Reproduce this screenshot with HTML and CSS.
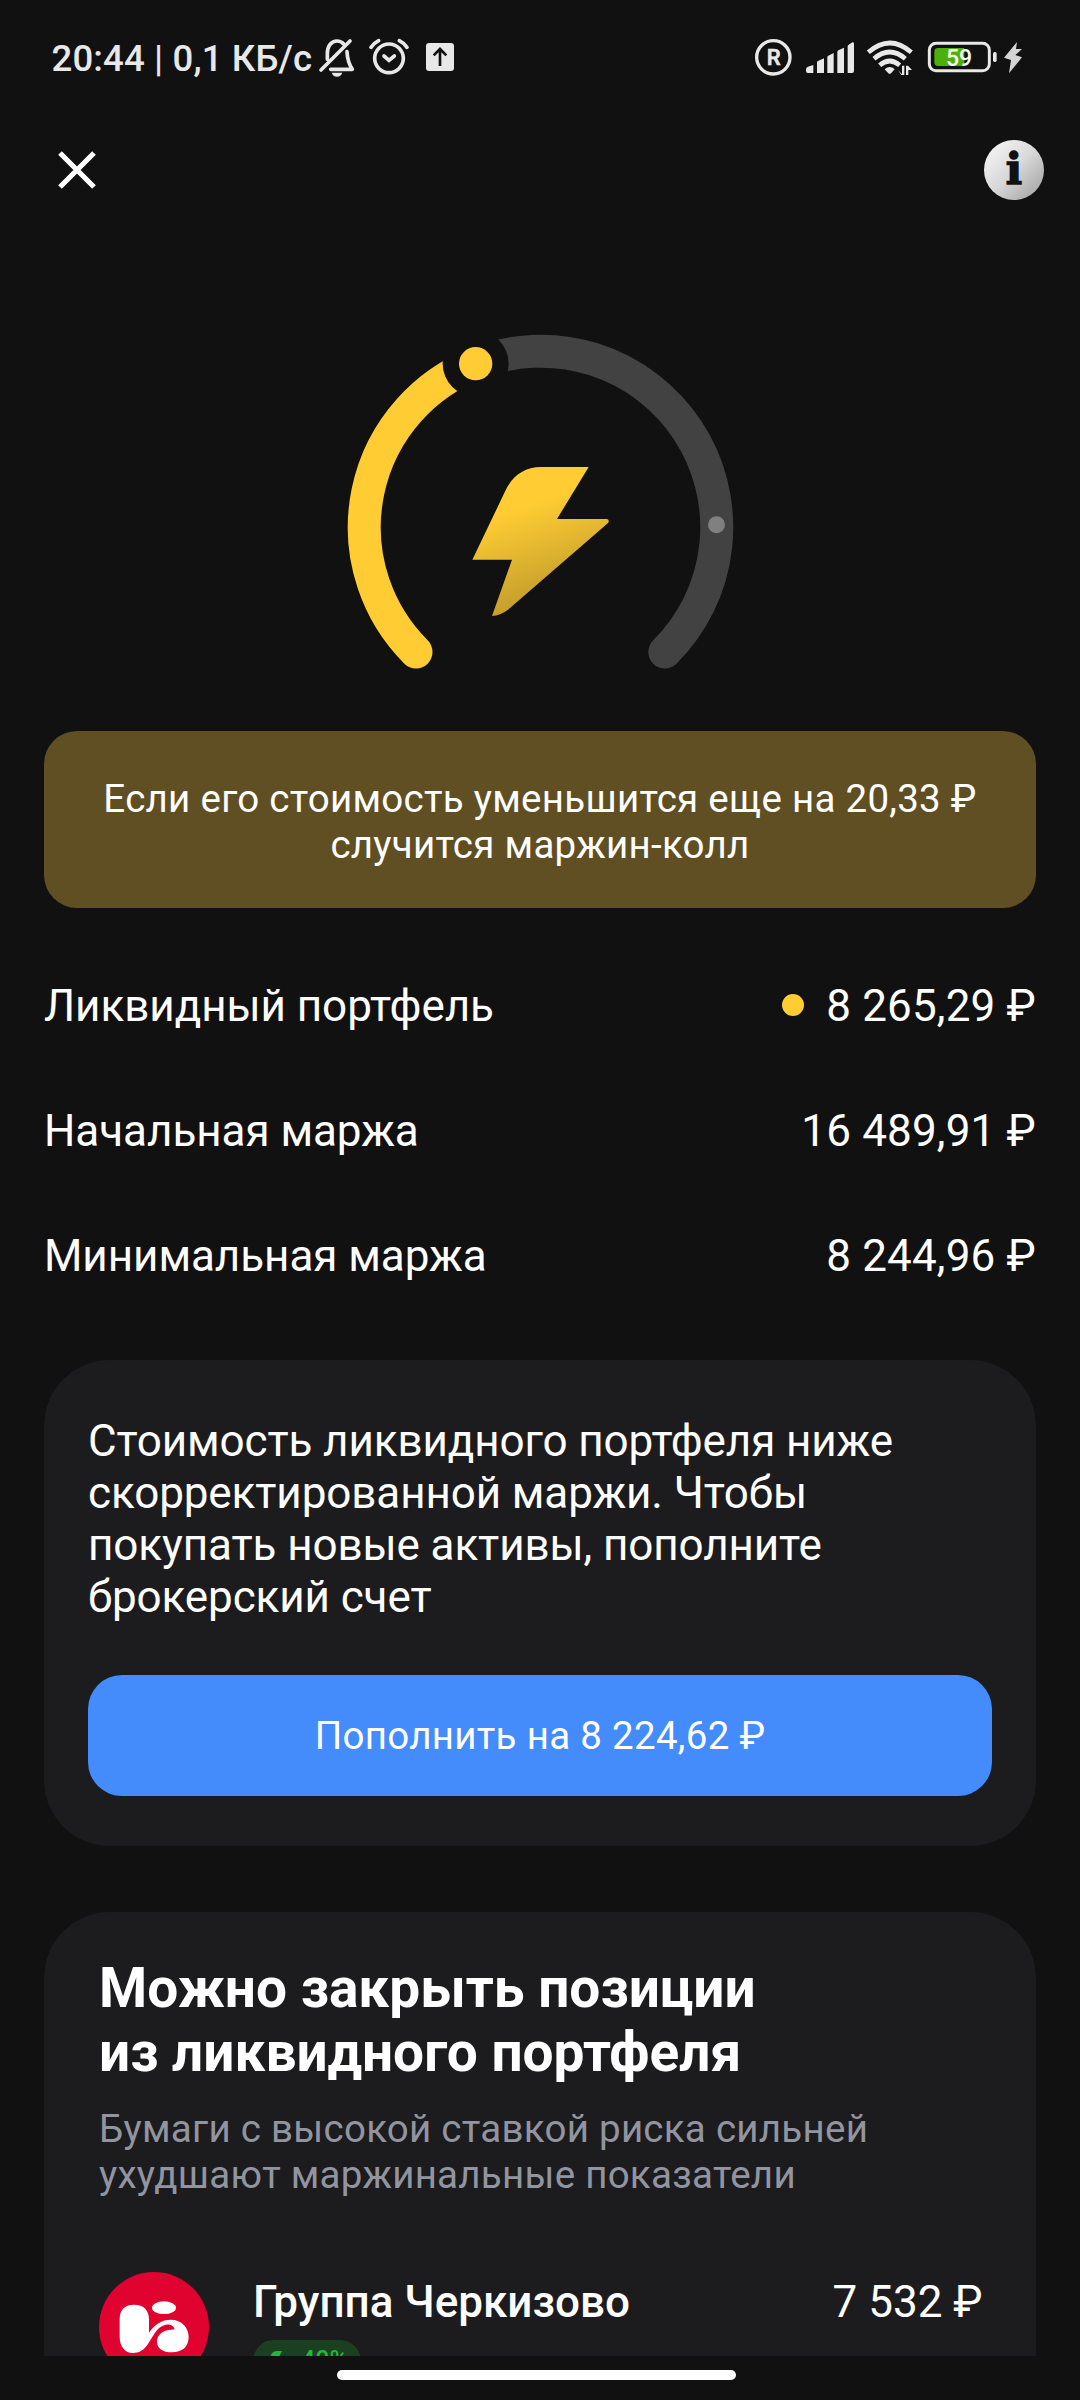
FILE: index.html
```html
<!DOCTYPE html>
<html lang="ru">
<head>
<meta charset="utf-8">
<title>Ликвидный портфель</title>
<link rel="stylesheet" href="styles.css">
</head>
<body>
<div class="screen">
  <header class="status">
    <span class="clock">20:44 | 0,1 КБ/с</span>
    <svg class="bell" viewBox="865 51 114 129" width="38" height="43" fill="none" stroke="#e8e8e8" stroke-width="11" stroke-linecap="round" stroke-linejoin="round">
      <path d="M893 118V102C893 76 906 63 922 63C930 63 937 66 942 72M952 95C953 118 958 133 968 148H903"/>
      <path d="M961 63L874 150"/>
      <path d="M906 158H938C935 166 930 170 922 170S909 166 906 158Z" fill="#e8e8e8" stroke="none"/>
    </svg>
    <svg class="alarm" viewBox="1010 51 132 129" width="44" height="43" fill="none" stroke="#e8e8e8" stroke-width="11" stroke-linecap="round">
      <circle cx="1076" cy="115" r="43"/>
      <path d="M1022 82Q1031 69 1045 62M1130 82Q1121 69 1107 62M1061 108L1076 121L1092 108"/>
    </svg>
    <svg class="upload" viewBox="1185 51 90 129" width="30" height="43">
      <rect x="1188" y="69" width="84" height="84" rx="9" fill="#e8e8e8"/>
      <path d="M1230 138V87M1211 106L1230 87L1249 106" fill="none" stroke="#111" stroke-width="8"/>
    </svg>
    <div class="system">
      <svg viewBox="72 51 120 129" width="40" height="43">
        <circle cx="130" cy="112" r="50" fill="none" stroke="#e8e8e8" stroke-width="10"/>
        <text class="roaming" x="131" y="135" text-anchor="middle">R</text>
      </svg>
      <svg viewBox="225 51 150 129" width="50" height="43" fill="#e8e8e8">
        <path d="M228 148Q228 142 234 140L250 135V159H234Q228 159 228 153ZM261 127Q261 124 264 123L282 115V159H261ZM292 111Q292 108 295 107L311 99V159H292ZM322 96Q322 93 325 91L342 83V159H322ZM353 79Q353 76 356 74L367 67Q372 65 372 71V153Q372 159 366 159H353Z"/>
      </svg>
      <svg viewBox="408 51 150 129" width="50" height="43" fill="none" stroke="#e8e8e8" stroke-width="14">
        <path d="M415 97Q479 41 544 97M432 116Q479 76 526 116M449 136Q479 110 509 136"/>
        <path d="M464 148Q479 134 494 148L483 160Q479 163 475 160Z" fill="#e8e8e8" stroke="none"/>
        <path d="M504 150L516 163V137H523V165H514ZM528 165V137H534L546 150H535V165Z" fill="#e8e8e8" stroke="none"/>
      </svg>
      <svg viewBox="591 51 291 129" width="97" height="43">
        <rect x="598" y="70" width="180" height="82" rx="20" fill="none" stroke="#e8e8e8" stroke-width="9"/>
        <path d="M624 84H703V138H624Q613 138 613 127V95Q613 84 624 84Z" fill="#4caf0c"/>
        <rect x="789" y="96" width="11" height="30" rx="5" fill="#e8e8e8"/>
        <text class="charge" x="687" y="137" text-anchor="middle">59</text>
        <path d="M861 66L822 113L843 120L837 160L876 112L856 105L876 87H858Z" fill="#d4d4d4"/>
      </svg>
    </div>
  </header>

  <div class="topbar">
    <svg class="close" viewBox="0 0 40 40" width="40" height="40"><path d="M3 3L37 37M37 3L3 37" stroke="#fff" stroke-width="5.2"/></svg>
    <div class="info">i</div>
  </div>

  <main class="content">
    <svg class="gauge" viewBox="0 0 1320 1140" width="440" height="380">
      <defs>
        <linearGradient id="bolt" gradientUnits="userSpaceOnUse" x1="600" y1="590" x2="725" y2="950">
          <stop offset="0" stop-color="#ffcd33"/>
          <stop offset="1" stop-color="#b18e2a"/>
        </linearGradient>
      </defs>
      <path d="M467 161A528 528 0 0 1 1034.500 1026" fill="none" stroke="#424242" stroke-width="99" stroke-linecap="round"/>
      <path d="M288 1026A528 528 0 0 1 467 161" fill="none" stroke="#ffcd33" stroke-width="99" stroke-linecap="round"/>
      <circle cx="467" cy="161" r="99" fill="#111"/>
      <circle cx="467" cy="161" r="50" fill="#ffcd33"/>
      <circle cx="1189.500" cy="644" r="25.500" fill="#808080"/>
      <path d="M457 749L554 547C575 499 612 471 663 471H806L711 627H861Q869 629 865 638L564 899Q541 917 516 918L576 749Z" fill="url(#bolt)"/>
    </svg>

    <section class="alert">Если его стоимость уменьшится еще на 20,33 ₽<br>случится маржин-колл</section>

    <dl class="figures">
      <div class="figure"><dt>Ликвидный портфель</dt><dd><span class="dot"></span>8 265,29 ₽</dd></div>
      <div class="figure"><dt>Начальная маржа</dt><dd>16 489,91 ₽</dd></div>
      <div class="figure"><dt>Минимальная маржа</dt><dd>8 244,96 ₽</dd></div>
    </dl>

    <section class="card deposit">
      <p class="deposit-text">Стоимость ликвидного портфеля ниже<br>скорректированной маржи. Чтобы<br>покупать новые активы, пополните<br>брокерский счет</p>
      <button class="button">Пополнить на 8 224,62 ₽</button>
    </section>

    <section class="card positions">
      <h2 class="title">Можно закрыть позиции<br>из ликвидного портфеля</h2>
      <p class="subtitle">Бумаги с высокой ставкой риска сильней<br>ухудшают маржинальные показатели</p>
      <div class="position">
        <svg class="logo" viewBox="57 96 330 330" width="110" height="110">
          <circle cx="222" cy="261" r="165" fill="#e0022f"/>
          <ellipse cx="252" cy="203" rx="36" ry="19" fill="#fff"/>
          <path d="M119 237C119 207 136 194 162 194C192 194 207 212 207 238V278C224 253 245 239 272 239C306 239 326 263 326 291C326 321 306 337 276 337C248 337 231 325 231 305C231 284 249 270 274 269L284 268C281 256 270 251 257 254C228 260 218 294 199 319C187 334 174 339 159 339C135 339 119 319 119 290Z" fill="#fff"/>
        </svg>
        <div class="security">
          <div class="name">Группа Черкизово</div>
          <div class="risk">
            <svg viewBox="0 0 16 24" width="16" height="24"><path d="M5 4Q7 2 10 2H15L11 10H15L2 22L6 13H1Z" fill="#1fb83a"/></svg>
            <span>40%</span>
          </div>
        </div>
        <div class="price">7 532 ₽</div>
      </div>
    </section>
  </main>

  <footer class="nav"><div class="home"></div></footer>
</div>
</body>
</html>
```
FILE: styles.css
```css
* { box-sizing: border-box; }

body {
  margin: 0;
  background: #111;
  color: #fff;
  font-family: Roboto, sans-serif;
  font-size: 44px;
}

.screen {
  display: flex;
  flex-direction: column;
  width: 1080px;
  height: 2400px;
  overflow: hidden;
}

svg { display: block; flex: none; }

/* Status bar */
.status {
  display: flex;
  flex: none;
  height: 80px;
  padding: 37px 56px 0 51.5px;
}
.clock {
  width: 266.5px;
  white-space: nowrap;
  font-size: 36.5px;
  font-weight: 500;
  line-height: 44px;
  letter-spacing: 0.15px;
  color: #e8e8e8;
}
.alarm { margin-left: 10.5px; }
.upload { margin-left: 14.5px; }
.system { display: flex; gap: 11px; margin-left: auto; }
.roaming { font: 500 66px Roboto, sans-serif; fill: #e8e8e8; stroke: #e8e8e8; stroke-width: 2px; }
.charge { font: 500 69px Roboto, sans-serif; fill: #f4fff0; }

/* Top bar */
.topbar {
  display: flex;
  flex: none;
  align-items: center;
  justify-content: space-between;
  height: 180px;
  padding: 0 36px 0 57px;
}
.info {
  width: 60px;
  height: 60px;
  border-radius: 50%;
  background: linear-gradient(135deg, #f0f0f0 15%, #d8d8d8 50%, #a8a8a8 90%);
  color: #111;
  font: bold 43px/59px "DejaVu Serif", serif;
  text-align: center;
  -webkit-text-stroke: 1.5px #111;
}

.content {
  display: flex;
  flex: 1;
  flex-direction: column;
  min-height: 0;
  padding: 50px 44px 0;
  overflow: hidden;
}
.gauge { margin: 0 auto 41px; }

.alert {
  flex: none;
  height: 177px;
  padding-top: 44.5px;
  border-radius: 33px;
  background: #614f24;
  font-size: 38.5px;
  line-height: 46px;
  letter-spacing: 0.28px;
  text-align: center;
  white-space: nowrap;
}

.figures { flex: none; margin: 35.5px 0 41.5px; }
.figure { display: flex; justify-content: space-between; line-height: 125px; white-space: nowrap; }
.figure dt { letter-spacing: -0.05px; }
.figure dd { display: flex; align-items: center; margin: 0; letter-spacing: 0.18px; }
.dot { width: 22px; height: 22px; margin: -3px 22px 0 0; border-radius: 50%; background: #ffcd33; }

.card { flex: none; border-radius: 66px; background: #1c1c1e; }

.deposit { padding: 55px 44px 50px; }
.deposit-text { margin: 0 0 52px; line-height: 52px; letter-spacing: -0.1px; white-space: nowrap; }
.button {
  display: block;
  width: 100%;
  height: 121px;
  padding: 0;
  border: 0;
  border-radius: 34px;
  background: #448bfc;
  color: #fff;
  font: 38.5px/120px Roboto, sans-serif;
  letter-spacing: 0.3px;
}

.positions { height: 620px; margin-top: 66px; padding: 44px 53.5px 0 55px; }
.title { margin: 0; font-size: 55px; font-weight: 700; line-height: 64.4px; white-space: nowrap; }
.subtitle { margin: 21px 0 74px; color: #92959f; font-size: 38.5px; line-height: 46px; letter-spacing: 0.27px; white-space: nowrap; }
.position { display: flex; align-items: flex-start; line-height: 52px; white-space: nowrap; }
.security { flex: 1; margin: 4.5px 0 0 44px; }
.name { font-weight: 500; }
.risk {
  display: flex;
  align-items: center;
  width: 108px;
  height: 42px;
  margin-top: 12px;
  padding-left: 14px;
  gap: 18px;
  border-radius: 21px;
  background: #1a4021;
  color: #1fb83a;
  font-size: 25px;
  font-weight: 500;
}
.price { margin-top: 4.5px; }

/* Gesture bar */
.nav { flex: none; height: 44px; padding-top: 14px; background: #111; }
.home { width: 399px; height: 10px; margin-left: 337px; border-radius: 5px; background: #fff; }
```
